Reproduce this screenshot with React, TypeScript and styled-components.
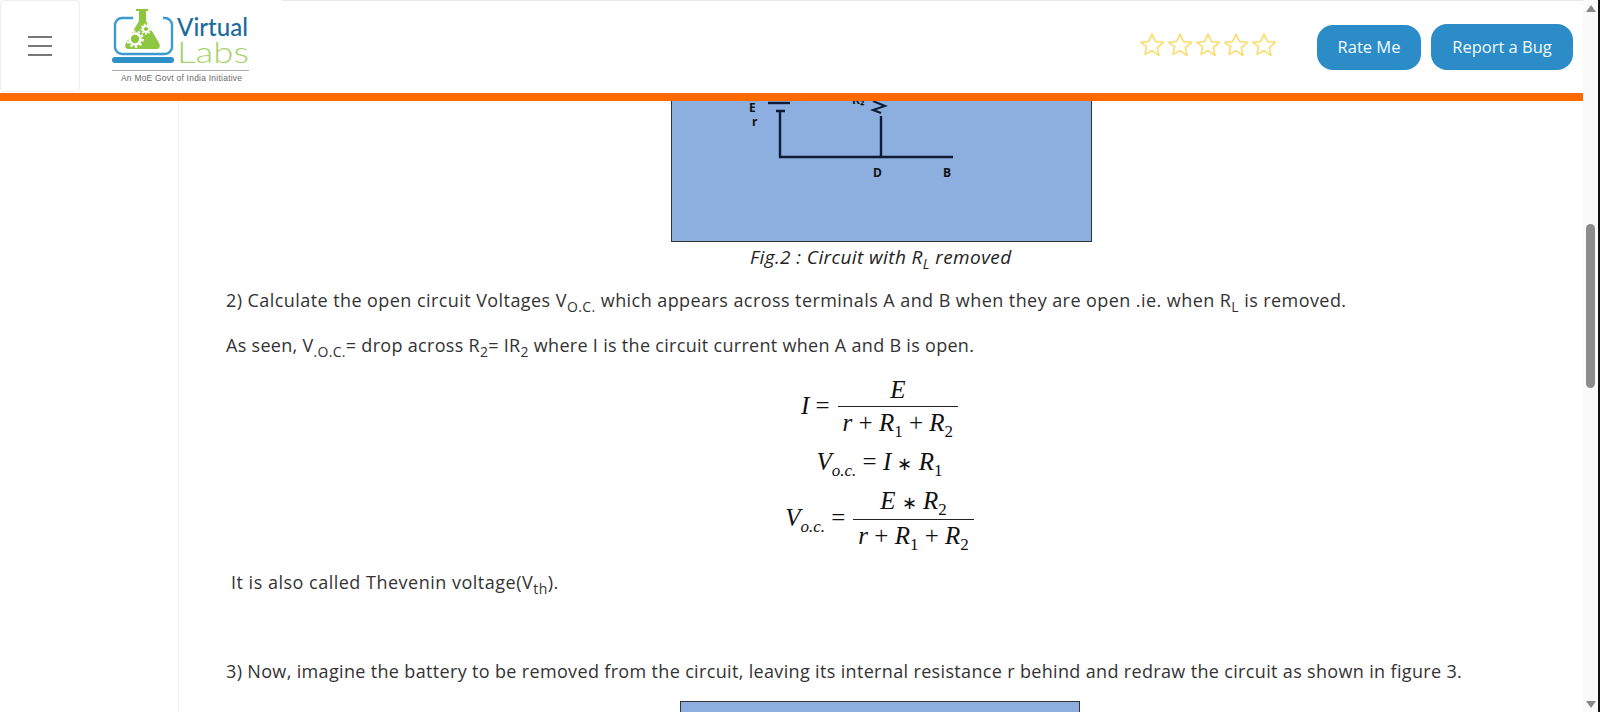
import { FC } from 'react';

import styled, { createGlobalStyle } from 'styled-components';

const GlobalStyle = createGlobalStyle`
  html, body {
    margin: 0;
    height: 100%;
    overflow: hidden;
    background: #fff;
  }
`;

const Logo: FC = () => {
  return (
    <LogoSvg viewBox='0 0 140 92' width='140' height='92'>
      <path
        d='M21 18H10a7 7 0 0 0-7 7v22a7 7 0 0 0 7 7h43a7 7 0 0 0 7-7V25a7 7 0 0 0-7-7h-2'
        fill='none'
        stroke='#3d9ad1'
        strokeWidth='2.4'
      />
      <rect x='0' y='57' width='62' height='6' rx='3' fill='#2e8fc9' />
      <path
        d='M24 9h12v2h-2v10l13 22c2 4 0 6-3 6H17c-3 0-5-2-3-6l13-22V11h-3z'
        fill='#8dc63f'
      />
      <circle cx='23' cy='39' r='5.500' fill='none' stroke='#fff' strokeWidth='2.600' />
      <circle cx='23' cy='39' r='7.800' fill='none' stroke='#fff' strokeWidth='2' strokeDasharray='2.500 2.400' />
      <circle cx='34' cy='29' r='3' fill='none' stroke='#fff' strokeWidth='1.800' />
      <circle cx='34' cy='29' r='4.800' fill='none' stroke='#fff' strokeWidth='1.500' strokeDasharray='1.800 1.500' />
      <text
        x='65'
        y='36'
        fontFamily='Lato, sans-serif'
        fontSize='25'
        fontWeight='500'
        fill='#1d6a9c'
        textLength='71'
        lengthAdjust='spacingAndGlyphs'
      >
        Virtual
      </text>
      <text
        x='65'
        y='63'
        fontFamily='Lato, sans-serif'
        fontSize='29'
        fontWeight='300'
        fill='#a5d36b'
        textLength='72'
        lengthAdjust='spacingAndGlyphs'
      >
        Labs
      </text>
      <rect x='0' y='70' width='137' height='1' fill='#aaa' />
      <text x='9' y='81' fontFamily='Liberation Sans, sans-serif' fontSize='8.400' fill='#666' textLength='121'>
        An MoE Govt of India Initiative
      </text>
    </LogoSvg>
  );
};

const Star: FC = () => {
  return (
    <svg width='24' height='24' viewBox='1.200 1.200 21.600 21.600'>
      <path
        d='M12 2.200l3 6.600 7.200.8-5.400 4.800 1.500 7.100L12 17l-6.300 3.500 1.500-7.100L1.800 9.600 9 8.800z'
        fill='none'
        stroke='#fbdc6a'
        strokeWidth='1.400'
        strokeLinejoin='round'
      />
    </svg>
  );
};

const Figure2: FC = () => {
  return (
    <FigureSvg viewBox='0 0 421 141' width='421' height='141'>
      <rect x='0.5' y='-20' width='420' height='160.500' fill='#8cafe0' stroke='#333' />
      <g stroke='#0d1b33' strokeWidth='2.400' fill='none'>
        <path d='M97 2h22' />
        <path d='M105 10h9M109 10v46h173' />
        <path d='M202 0l12 5-12 4 8 3' strokeWidth='2' />
        <path d='M210 15v41' />
      </g>
      <CircuitLabel x='78' y='11'>E</CircuitLabel>
      <CircuitLabel x='81' y='25'>r</CircuitLabel>
      <CircuitLabel x='181' y='3'>R₂</CircuitLabel>
      <CircuitLabel x='202' y='76'>D</CircuitLabel>
      <CircuitLabel x='272' y='76'>B</CircuitLabel>
    </FigureSvg>
  );
};

const Denominator: FC = () => {
  return (
    <Den>
      <i>r</i> + <i>R</i>
      <sub>1</sub> + <i>R</i>
      <sub>2</sub>
    </Den>
  );
};

const App: FC = () => {
  return (
    <Page>
      <GlobalStyle />
      <Column>
        <Header>
          <MenuBox>
            <Burger>
              <span />
              <span />
              <span />
            </Burger>
          </MenuBox>
          <Logo />
          <Actions>
            <Stars>
              <Star />
              <Star />
              <Star />
              <Star />
              <Star />
            </Stars>
            <Button>Rate Me</Button>
            <Button $large>Report a Bug</Button>
          </Actions>
        </Header>
        <Bar />
        <Main>
          <Side />
          <Content>
            <Centered>
              <Figure2 />
            </Centered>
            <Caption>
              Fig.2 : Circuit with R<sub>L</sub> removed
            </Caption>
            <Para $track={0.43}>
              2) Calculate the open circuit Voltages V<sub>O.C.</sub> which appears across terminals A and B when they
              are open .ie. when R<sub>L</sub> is removed.
            </Para>
            <Para $gap={17} $track={0.3}>
              As seen, V<sub>.O.C.</sub>= drop across R<sub>2</sub>= IR<sub>2</sub> where I is the circuit current when
              A and B is open.
            </Para>
            <MathBlock>
              <MathRow>
                <span>
                  <i>I</i> =
                </span>
                <Fraction>
                  <Num>
                    <i>E</i>
                  </Num>
                  <Denominator />
                </Fraction>
              </MathRow>
              <MathRow $short>
                <span>
                  <i>V</i>
                  <MathSub>o.c.</MathSub> = <i>I</i> <MathOp>∗</MathOp> <i>R</i>
                  <sub>1</sub>
                </span>
              </MathRow>
              <MathRow>
                <span>
                  <i>V</i>
                  <MathSub>o.c.</MathSub> =
                </span>
                <Fraction>
                  <Num>
                    <i>E</i> <MathOp>∗</MathOp> <i>R</i>
                    <sub>2</sub>
                  </Num>
                  <Denominator />
                </Fraction>
              </MathRow>
            </MathBlock>
            <Note>
              It is also called Thevenin voltage(V<sub>th</sub>).
            </Note>
            <Para $gap={61} $track={0.34}>
              3) Now, imagine the battery to be removed from the circuit, leaving its internal resistance r behind and
              redraw the circuit as shown in figure 3.
            </Para>
            <Centered>
              <NextFigure />
            </Centered>
          </Content>
        </Main>
      </Column>
      <Scrollbar>
        <Arrow />
        <Thumb />
        <Arrow $down />
      </Scrollbar>
      <Edge />
    </Page>
  );
};

const Page = styled.div`
  display: flex;
  height: 712px;
  width: 1600px;
  overflow: hidden;
  font-family: 'Open Sans', 'Liberation Sans', sans-serif;
  color: #333;
`;

const Column = styled.div`
  flex: 1;
  min-width: 0;
  display: flex;
  flex-direction: column;
`;

const Header = styled.header`
  height: 93px;
  flex: none;
  display: flex;
  align-items: stretch;
`;

const MenuBox = styled.div`
  width: 80px;
  height: 92px;
  flex: none;
  box-sizing: border-box;
  border: 1px solid #eee;
  border-radius: 4px;
  display: flex;
  align-items: center;
  justify-content: center;
`;

const Burger = styled.div`
  width: 24px;
  display: flex;
  flex-direction: column;
  gap: 7px;

  span {
    display: block;
    height: 2px;
    background: #777;
  }
`;

const LogoSvg = styled.svg`
  margin-left: 32px;
  flex: none;
`;

const Actions = styled.div`
  margin-left: 30px;
  flex: 1;
  box-sizing: border-box;
  border-top: 1px solid #e8e8e8;
  display: flex;
  align-items: center;
  justify-content: flex-end;
  padding-right: 10px;
`;

const Stars = styled.div`
  display: flex;
  gap: 4px;
  margin: 0 41px 5px 0;
`;

const Button = styled.div<{ $large?: boolean }>`
  display: flex;
  align-items: center;
  justify-content: center;
  box-sizing: border-box;
  padding-bottom: 2px;
  background: #2b8cc7;
  color: #f2fbff;
  border-radius: 16px;
  font-size: 16.5px;
  width: ${(p) => (p.$large ? '142px' : '104px')};
  height: ${(p) => (p.$large ? '46px' : '45px')};
  margin: ${(p) => (p.$large ? '0 0 0 10px' : '1px 0 0')};
`;

const Bar = styled.div`
  height: 8px;
  flex: none;
  background: #ff6a00;
`;

const Main = styled.div`
  flex: 1;
  min-height: 0;
  display: flex;
  overflow: hidden;
`;

const Side = styled.div`
  width: 178px;
  flex: none;
  border-right: 1px solid #eee;
`;

const Content = styled.main`
  flex: 1;
  min-width: 0;
  padding: 0 0 0 47px;
  font-size: 18px;
`;

const Centered = styled.div`
  display: flex;
  padding-left: 445px;
`;

const FigureSvg = styled.svg`
  display: block;
  flex: none;
`;

const CircuitLabel = styled.text`
  font-family: 'Open Sans', sans-serif;
  font-size: 12px;
  font-weight: 700;
  fill: #111;
`;

const Caption = styled.div`
  font-style: italic;
  font-weight: 500;
  font-size: 19px;
  letter-spacing: 0.4px;
  color: #222;
  padding-left: 524px;
  height: 30px;
  line-height: 30px;

  sub {
    font-size: 14px;
    line-height: 0;
  }
`;

const Para = styled.p<{ $gap?: number; $track?: number }>`
  margin: ${(p) => p.$gap ?? 14}px 0 0;
  line-height: 28px;
  white-space: nowrap;
  letter-spacing: ${(p) => p.$track ?? 0.3}px;

  sub {
    font-size: 14px;
    line-height: 0;
  }
`;

const MathBlock = styled.div`
  margin-top: 17px;
  display: flex;
  flex-direction: column;
  align-items: center;
  font-family: 'Liberation Serif', serif;
  font-size: 25px;
  color: #111;
  padding-right: 50px;
`;

const MathRow = styled.div<{ $short?: boolean }>`
  display: flex;
  align-items: center;
  white-space: pre;
  height: ${(p) => (p.$short ? '52px' : '60px')};

  sub {
    font-size: 17px;
    line-height: 0;
  }
`;

const MathSub = styled.sub`
  font-style: italic;
`;

const MathOp = styled.span`
  font-size: 18px;
`;

const Fraction = styled.span`
  display: inline-flex;
  flex-direction: column;
  align-items: center;
  margin-left: 8px;
`;

const Num = styled.span`
  padding: 0 2px 2px;
  line-height: 28px;
`;

const Den = styled.span`
  padding: 2px 5px 0;
  line-height: 28px;
  border-top: 1px solid #222;
`;

const Note = styled.p`
  margin: 20px 0 0 5px;
  line-height: 28px;
  letter-spacing: 0.5px;

  sub {
    font-size: 14px;
    line-height: 0;
  }
`;

const NextFigure = styled.div`
  width: 400px;
  height: 40px;
  box-sizing: border-box;
  margin: 16px 0 0 9px;
  background: #8cafe0;
  border: 1px solid #333;
`;

const Scrollbar = styled.div`
  width: 15px;
  flex: none;
  background: #fafafa;
  display: flex;
  flex-direction: column;
  align-items: center;
`;

const Arrow = styled.div<{ $down?: boolean }>`
  margin: ${(p) => (p.$down ? 'auto 0 4px' : '5px 0 0')};
  width: 0;
  height: 0;
  border-left: 5px solid transparent;
  border-right: 5px solid transparent;
  ${(p) => (p.$down ? 'border-top' : 'border-bottom')}: 7px solid #8a8a8a;
`;

const Thumb = styled.div`
  margin-top: 212px;
  width: 9px;
  height: 164px;
  border-radius: 5px;
  background: #8c8c8c;
`;

const Edge = styled.div`
  width: 2px;
  flex: none;
  background: #111;
`;

export default App;
